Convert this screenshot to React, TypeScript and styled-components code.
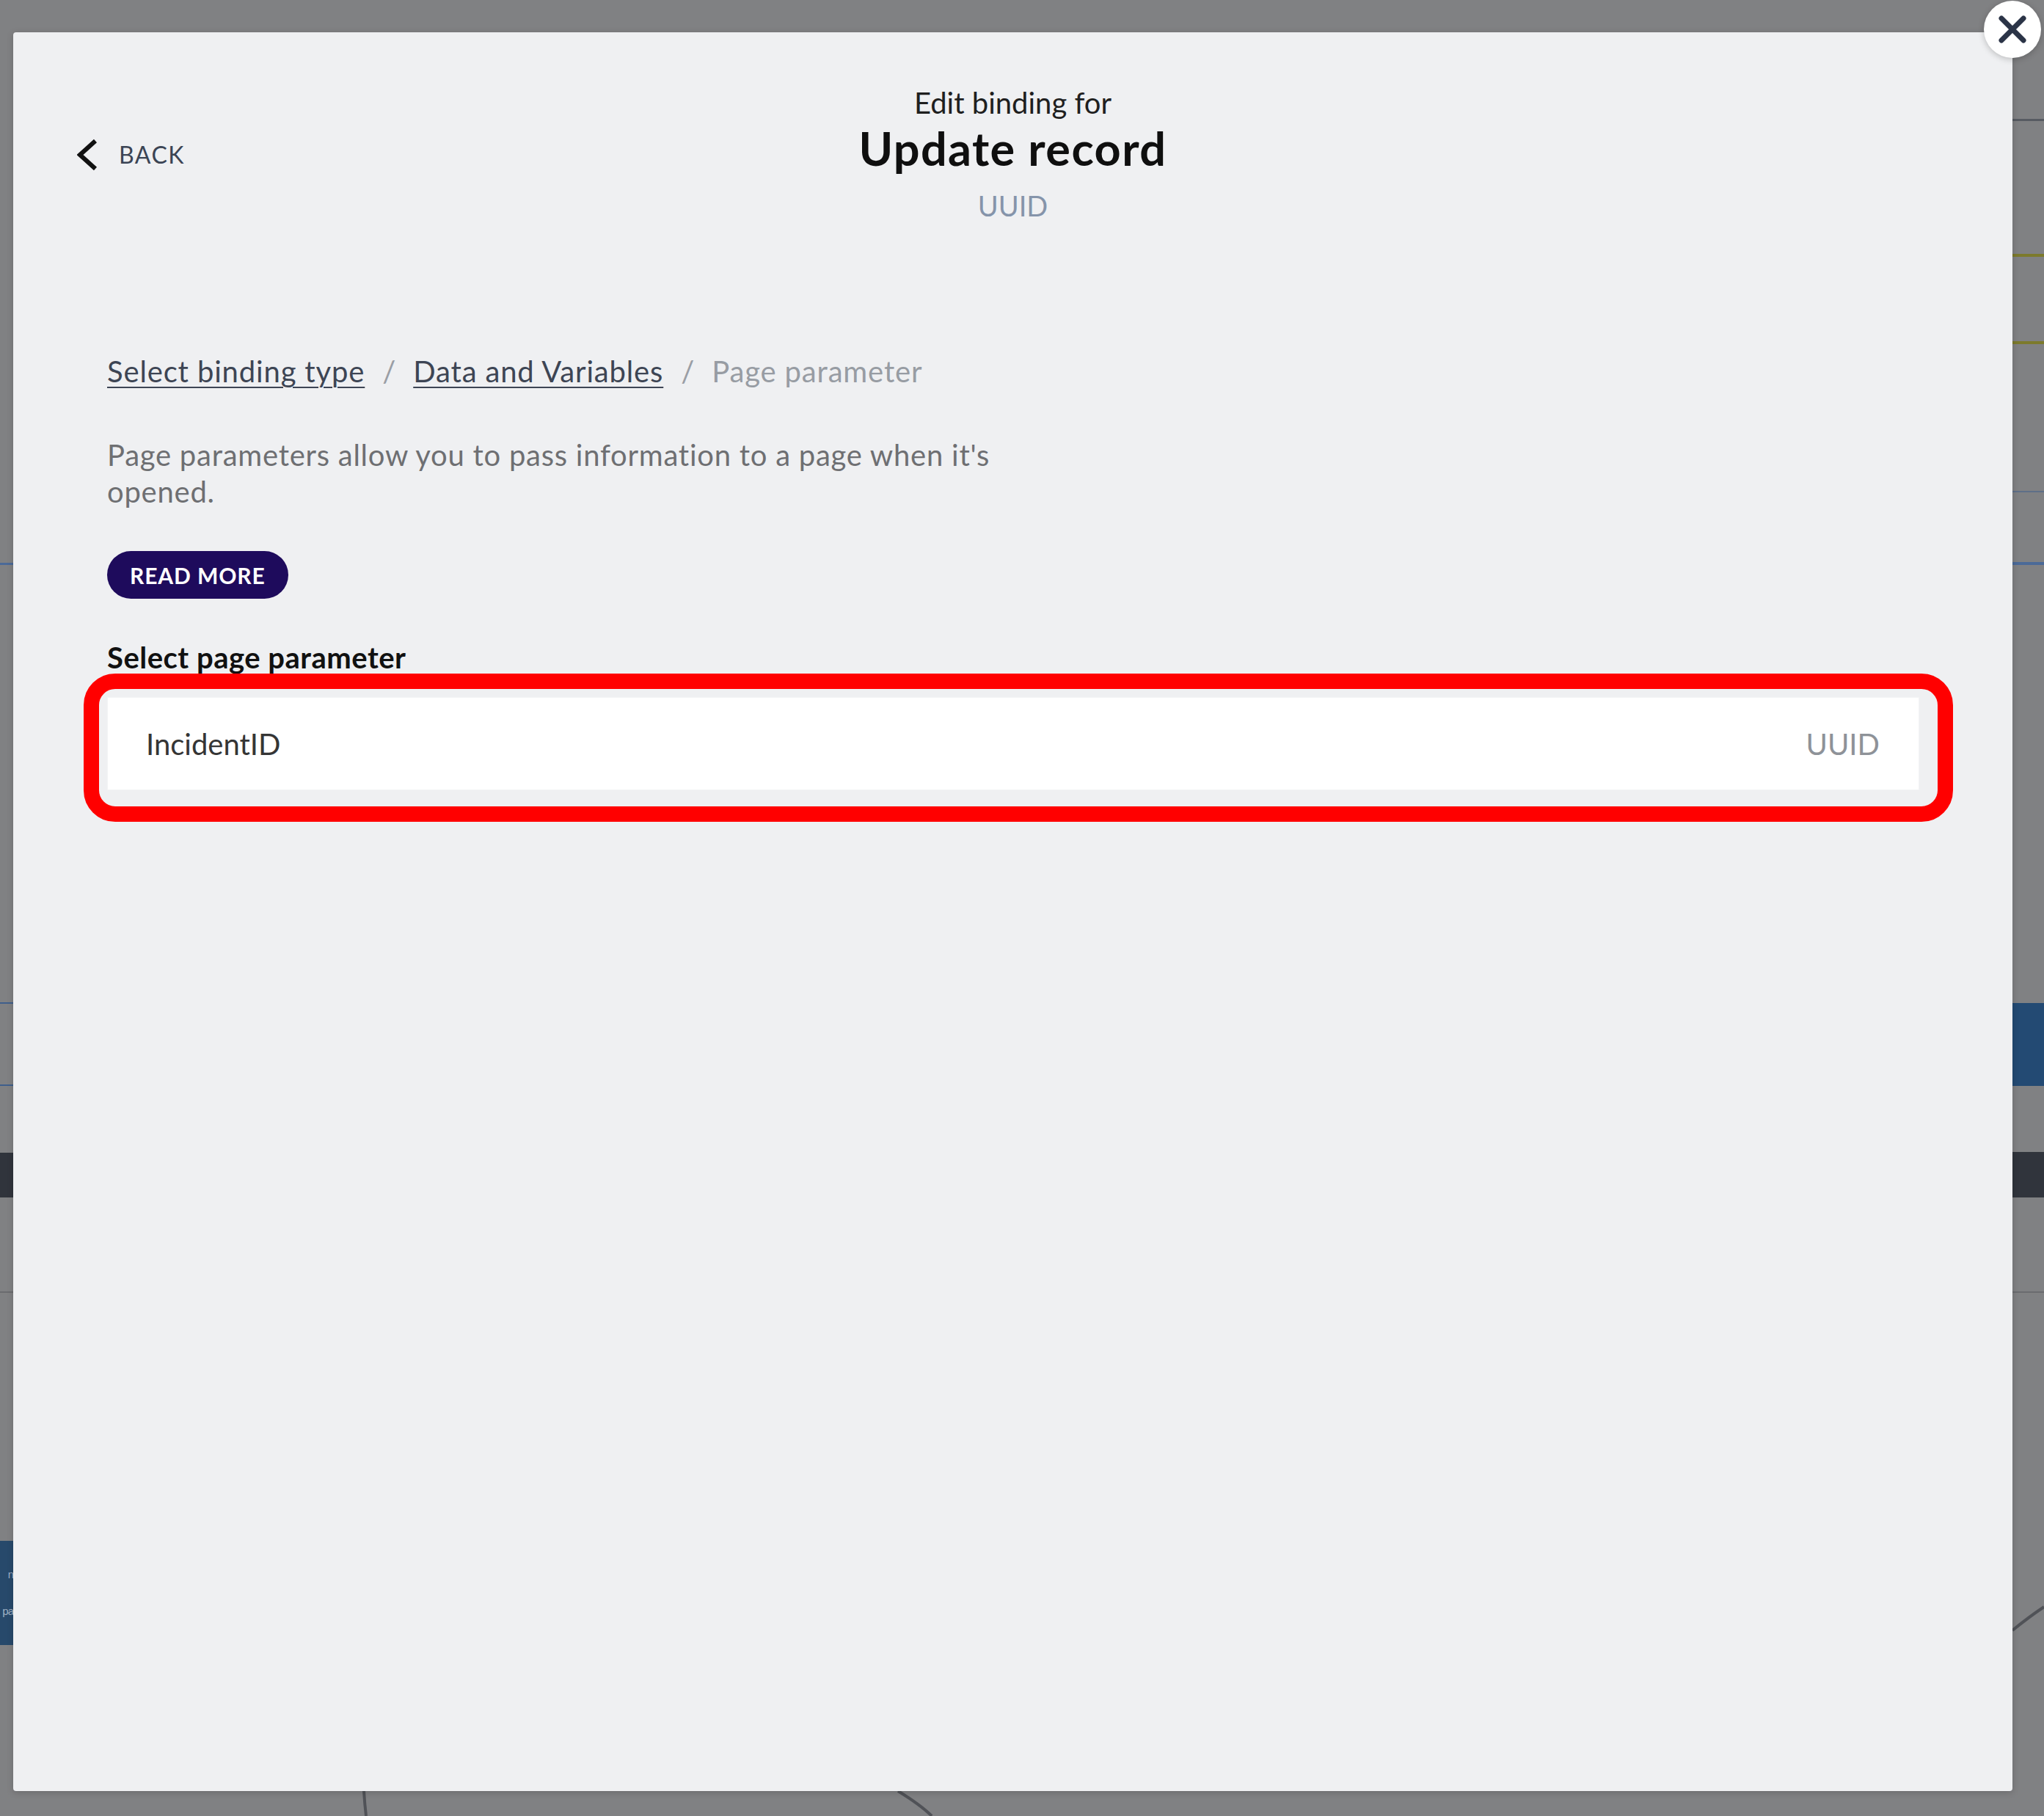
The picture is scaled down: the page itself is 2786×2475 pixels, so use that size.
import React from 'react';
import styled, { createGlobalStyle } from 'styled-components';

const GlobalStyle = createGlobalStyle`
  html, body { margin: 0; padding: 0; }
  body {
    width: 2786px;
    height: 2475px;
    overflow: hidden;
    background: #808183;
    font-family: Lato, "Liberation Sans", Arial, sans-serif;
    -webkit-font-smoothing: antialiased;
  }
  * { box-sizing: border-box; }
`;

const Screen = styled.div`
  position: relative;
  width: 2786px;
  height: 2475px;
  overflow: hidden;
  background: #808183;
  display: flex;
  padding: 44px 43px 34px 18px;
`;

/* dimmed application behind the overlay */
const Stripe = styled.div<{ $top: number; $h: number; $side: 'left' | 'right'; $color: string }>`
  position: absolute;
  top: ${(p) => p.$top}px;
  height: ${(p) => p.$h}px;
  ${(p) => (p.$side === 'left' ? 'left: 0; width: 18px;' : 'right: 0; width: 43px;')}
  background: ${(p) => p.$color};
`;

const SideBlock = styled.div`
  position: absolute;
  left: 0;
  top: 2100px;
  width: 18px;
  height: 142px;
  background: #27496b;
  display: flex;
  flex-direction: column;
  align-items: flex-end;
  justify-content: center;
  color: #9fb0c4;
  font-family: "Liberation Sans", Arial, sans-serif;
  font-size: 15px;
  line-height: 50px;
  letter-spacing: -1px;
  white-space: nowrap;
`;

const Curves = styled.svg`
  position: absolute;
  inset: 0;
  pointer-events: none;
`;

const Modal = styled.div`
  position: relative;
  z-index: 1;
  flex: 1;
  background: #eff0f2;
  border-radius: 4px;
  box-shadow: 0 2px 10px rgba(0, 0, 0, 0.18);
  display: flex;
  flex-direction: column;
  padding-top: 72px;
`;

const CloseButton = styled.button`
  position: absolute;
  top: -43px;
  right: -39px;
  width: 78px;
  height: 78px;
  border-radius: 50%;
  border: none;
  padding: 0;
  background: #ffffff;
  box-shadow: 0 2px 8px rgba(0, 0, 0, 0.22);
  display: flex;
  align-items: center;
  justify-content: center;
  cursor: pointer;
`;

const Header = styled.header`
  display: grid;
  grid-template-columns: 1fr auto 1fr;
  align-items: center;
  padding: 0 87px;
`;

const BackLink = styled.a`
  justify-self: start;
  display: flex;
  align-items: center;
  gap: 27px;
  color: #3b4454;
  font-size: 32px;
  letter-spacing: 1.5px;
  text-decoration: none;
  cursor: pointer;
  margin-top: 2px;
`;

const TitleBlock = styled.div`
  display: flex;
  flex-direction: column;
  align-items: center;
`;

const Eyebrow = styled.div`
  font-size: 40px;
  line-height: 48px;
  color: #1f1f1f;
`;

const Title = styled.h1`
  margin: 0;
  font-size: 63px;
  line-height: 76px;
  font-weight: 700;
  letter-spacing: 1.4px;
  color: #0f0f0f;
`;

const TypeTag = styled.div`
  margin-top: 17px;
  font-size: 38px;
  line-height: 46px;
  color: #8594aa;
`;

const Body = styled.main`
  display: flex;
  flex-direction: column;
  align-items: flex-start;
  padding: 179px 127px 0 128px;
`;

const Breadcrumb = styled.nav`
  display: flex;
  align-items: baseline;
  font-size: 40px;
  line-height: 48px;
  letter-spacing: 0.85px;
`;

const Crumb = styled.a`
  color: #3d4554;
  text-decoration: underline;
  text-decoration-thickness: 2px;
  text-underline-offset: 6px;
  cursor: pointer;
`;

const Separator = styled.span`
  color: #9a9ea5;
  margin: 0 23px 0 24px;
`;

const Current = styled.span`
  color: #979ca3;
`;

const Description = styled.p`
  margin: 65px 0 0;
  max-width: 1270px;
  font-size: 40px;
  line-height: 50px;
  letter-spacing: 0.75px;
  color: #6e6f72;
`;

const PillButton = styled.button`
  margin-top: 56px;
  height: 65px;
  padding: 0 31px;
  border: none;
  border-radius: 33px;
  background: #1e0b5c;
  color: #ffffff;
  font-family: inherit;
  font-size: 30px;
  font-weight: 700;
  letter-spacing: 0.9px;
  cursor: pointer;
`;

const SectionLabel = styled.div`
  margin-top: 56px;
  font-size: 40px;
  line-height: 48px;
  font-weight: 700;
  letter-spacing: 0.5px;
  color: #111111;
`;

const OptionRow = styled.div`
  position: relative;
  align-self: stretch;
  margin-top: 30px;
  height: 127px;
  padding: 0 53px 0 52px;
  background: #ffffff;
  border: 1px solid #f3f4f5;
  display: flex;
  align-items: center;
  justify-content: space-between;
  font-size: 40px;
`;

const OptionName = styled.span`
  color: #353535;
`;

const OptionType = styled.span`
  color: #8e9298;
`;

const Annotation = styled.div`
  position: absolute;
  top: -33px;
  left: -33px;
  right: -47px;
  bottom: -44px;
  border: 21px solid #ff0000;
  border-radius: 43px;
  pointer-events: none;
`;

export default function App() {
  return (
    <>
      <GlobalStyle />
      <Screen>
        <Stripe $side="left" $top={767} $h={3} $color="#4b6a98" />
        <Stripe $side="left" $top={1366} $h={2} $color="#3f5f8c" />
        <Stripe $side="left" $top={1478} $h={2} $color="#3f5f8c" />
        <Stripe $side="left" $top={1571} $h={61} $color="#30343c" />
        <Stripe $side="left" $top={1760} $h={2} $color="#6b6c6f" />
        <SideBlock>
          <span>n</span>
          <span>pa</span>
        </SideBlock>

        <Stripe $side="right" $top={162} $h={3} $color="#575b62" />
        <Stripe $side="right" $top={346} $h={4} $color="#7c7a2c" />
        <Stripe $side="right" $top={465} $h={4} $color="#7c7a2c" />
        <Stripe $side="right" $top={669} $h={2} $color="#5e6f88" />
        <Stripe $side="right" $top={766} $h={4} $color="#4b6a98" />
        <Stripe $side="right" $top={1367} $h={113} $color="#234a73" />
        <Stripe $side="right" $top={1570} $h={62} $color="#30343c" />
        <Stripe $side="right" $top={1760} $h={2} $color="#6b6c6f" />

        <Curves width="2786" height="2475" viewBox="0 0 2786 2475">
          <path d="M2743 2222 Q2765 2204 2786 2190" stroke="#505257" strokeWidth="4" fill="none" />
          <path d="M496 2441 Q497 2458 499 2475" stroke="#505257" strokeWidth="4" fill="none" />
          <path d="M1224 2441 Q1255 2460 1270 2475" stroke="#505257" strokeWidth="4" fill="none" />
        </Curves>

        <Modal>
          <CloseButton aria-label="Close">
            <svg width="38" height="38" viewBox="0 0 38 38">
              <path d="M4 4 L34 34 M34 4 L4 34" stroke="#2b3447" strokeWidth="7" strokeLinecap="round" fill="none" />
            </svg>
          </CloseButton>

          <Header>
            <BackLink>
              <svg width="30" height="44" viewBox="0 0 30 44">
                <path d="M25 3 L4 22 L25 41" stroke="#111111" strokeWidth="6" fill="none" />
              </svg>
              BACK
            </BackLink>
            <TitleBlock>
              <Eyebrow>Edit binding for</Eyebrow>
              <Title>Update record</Title>
              <TypeTag>UUID</TypeTag>
            </TitleBlock>
            <div />
          </Header>

          <Body>
            <Breadcrumb>
              <Crumb>Select binding type</Crumb>
              <Separator>/</Separator>
              <Crumb>Data and Variables</Crumb>
              <Separator>/</Separator>
              <Current>Page parameter</Current>
            </Breadcrumb>

            <Description>
              Page parameters allow you to pass information to a page when it's opened.
            </Description>

            <PillButton>READ MORE</PillButton>

            <SectionLabel>Select page parameter</SectionLabel>

            <OptionRow>
              <OptionName>IncidentID</OptionName>
              <OptionType>UUID</OptionType>
              <Annotation />
            </OptionRow>
          </Body>
        </Modal>
      </Screen>
    </>
  );
}
